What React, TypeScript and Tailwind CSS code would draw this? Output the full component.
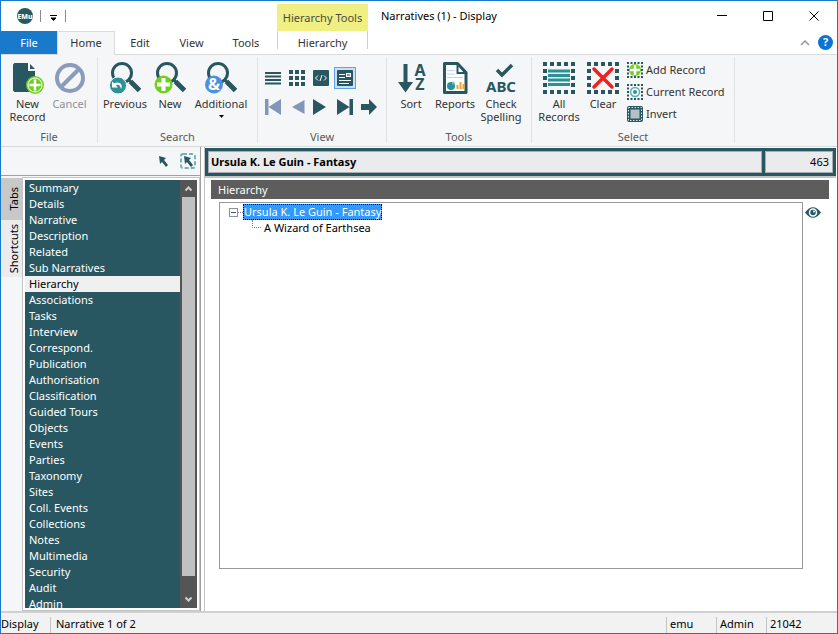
import type { ReactNode } from "react";
import clsx from "clsx";

const sections = [
  "Summary",
  "Details",
  "Narrative",
  "Description",
  "Related",
  "Sub Narratives",
  "Hierarchy",
  "Associations",
  "Tasks",
  "Interview",
  "Correspond.",
  "Publication",
  "Authorisation",
  "Classification",
  "Guided Tours",
  "Objects",
  "Events",
  "Parties",
  "Taxonomy",
  "Sites",
  "Coll. Events",
  "Collections",
  "Notes",
  "Multimedia",
  "Security",
  "Audit",
  "Admin",
];

export default function App() {
  return (
    <div className="flex h-screen flex-col border border-[#1979ca] bg-white font-['Noto_Sans','Open_Sans',sans-serif] text-[11px] text-black">
      <TitleBar />
      <Ribbon />
      <main className="flex min-h-0 flex-1 gap-[3px] bg-white">
        <Sidebar />
        <RecordPane />
      </main>
      <StatusBar />
    </div>
  );
}

/* Title bar and ribbon tabs */

function TitleBar() {
  return (
    <header className="flex h-[53px] shrink-0 text-[#333]">
      <div className="flex w-[276px] shrink-0 flex-col">
        <div className="flex h-[30px] items-center pl-4">
          <AppLogo />
          <span className="ml-[7px] h-3 w-px bg-[#8a8a8a]" />
          <button type="button" aria-label="Customise toolbar" className="ml-2 flex h-4 w-4 items-center">
            <svg width="10" height="8" viewBox="0 0 10 8" className="mt-1">
              <path d="M1 1.500h7M2 4h5L4.500 6.500z" stroke="#000" strokeWidth="1" />
            </svg>
          </button>
          <span className="h-3 w-px bg-[#8a8a8a]" />
        </div>
        <nav className="flex flex-1 text-center">
          <button type="button" className="w-14 bg-[#1979ca] pt-[2px] text-white">
            File
          </button>
          <button type="button" className="relative -mb-px w-[58px] border border-b-0 border-[#dadbdc] bg-[#f5f6f7]">
            Home
          </button>
          <button type="button" className="w-[50px] pt-[2px]">Edit</button>
          <button type="button" className="w-[53px] pt-[2px]">View</button>
          <button type="button" className="w-[56px] pt-[2px]">Tools</button>
        </nav>
      </div>
      <div className="flex w-[91px] shrink-0 flex-col pt-[3px] text-center">
        <div className="flex h-[27px] shrink-0 items-center justify-center bg-[#f0ef83] pt-[2px] text-[#4b4b3a]">
          Hierarchy Tools
        </div>
        <button type="button" className="h-[18px] border-x border-[#d0d0d0] pt-[5px] leading-[13px]">
          Hierarchy
        </button>
      </div>
      <div className="flex flex-1 flex-col">
        <div className="flex h-[30px] items-center pl-[13px]">
          <h1 className="flex-1 text-[11px] text-black">Narratives (1) - Display</h1>
          <WindowButton label="Minimise">
            <path d="M0 4.500h10" />
          </WindowButton>
          <WindowButton label="Maximise">
            <path d="M.5.500h9v9h-9z" />
          </WindowButton>
          <WindowButton label="Close">
            <path d="M.5.500l9 9M9.500.500l-9 9" />
          </WindowButton>
        </div>
        <div className="flex flex-1 items-center justify-end gap-2 pr-1">
          <button type="button" aria-label="Collapse ribbon">
            <svg width="10" height="6" viewBox="0 0 10 6" fill="none" stroke="#999" strokeWidth="1.500">
              <path d="M1 5l4-4 4 4" />
            </svg>
          </button>
          <button
            type="button"
            aria-label="Help"
            className="flex h-[15px] w-[15px] items-center justify-center rounded-full bg-[#0a74d4] text-[11px] font-bold text-white"
          >
            ?
          </button>
        </div>
      </div>
    </header>
  );
}

function AppLogo() {
  return (
    <svg width="16" height="16" viewBox="0 0 16 16" className="overflow-visible">
      <circle cx="8" cy="8" r="8" fill="#2a5860" />
      <text x="8" y="11" textAnchor="middle" fontSize="7" fontWeight="800" fill="#fff">
        EMu
      </text>
    </svg>
  );
}

function WindowButton({ label, children }: { label: string; children: ReactNode }) {
  return (
    <button type="button" aria-label={label} className="flex h-full w-[46px] items-center justify-center">
      <svg width="10" height="10" viewBox="0 0 10 10" fill="none" stroke="#000">
        {children}
      </svg>
    </button>
  );
}

/* Ribbon */

function Ribbon() {
  return (
    <div className="flex h-[93px] shrink-0 border-y border-[#dadbdc] bg-[#f5f6f7] pt-[2px] pb-[3px] text-[#333]">
      <RibbonGroup label="File" className="w-[97px]">
        <RibbonButton label="New Record" className="w-[47px]">
          <NewRecordIcon />
        </RibbonButton>
        <RibbonButton label="Cancel" className="w-[37px]" disabled>
          <CancelIcon />
        </RibbonButton>
      </RibbonGroup>
      <RibbonGroup label="Search" className="w-[160px]">
        <RibbonButton label="Previous" className="w-[48px]">
          <Magnifier>
            <circle cx="9" cy="23.500" r="8.500" fill="#2a9196" stroke="#f5f6f7" />
            <path d="M3 19.500v6h6l-2.200-2.200c2-1.600 4.700-.3 5.200 3.700 2.500-4-1.200-8.500-7-5.800z" fill="#fff" />
          </Magnifier>
        </RibbonButton>
        <RibbonButton label="New" className="w-[42px]">
          <Magnifier>
            <circle cx="9.500" cy="22.500" r="9" fill="#6fcf1f" />
            <path d="M9.500 16v13M3 22.500h13" stroke="#fff" strokeWidth="4" />
          </Magnifier>
        </RibbonButton>
        <RibbonButton label="Additional" className="w-[60px]" menu>
          <Magnifier>
            <circle cx="9" cy="22.500" r="9" fill="#4a90e2" />
            <text x="9" y="28" textAnchor="middle" fontSize="16" fontWeight="700" fill="#fff">
              &amp;
            </text>
          </Magnifier>
        </RibbonButton>
      </RibbonGroup>
      <RibbonGroup label="View" className="w-[129px]">
        <ViewButtons />
      </RibbonGroup>
      <RibbonGroup label="Tools" className="w-[145px]">
        <RibbonButton label="Sort" className="w-[42px]">
          <SortIcon />
        </RibbonButton>
        <RibbonButton label="Reports" className="w-[46px]">
          <ReportsIcon />
        </RibbonButton>
        <RibbonButton label="Check Spelling" className="w-[46px]">
          <SpellingIcon />
        </RibbonButton>
      </RibbonGroup>
      <RibbonGroup label="Select" className="w-[203px]">
        <RibbonButton label="All Records" className="w-[48px]">
          <svg width="32" height="32" viewBox="0 0 32 32">
            <Marquee />
            <path d="M5 9h22M5 13.500h22M5 18h22M5 22.500h22" stroke="#2a9196" strokeWidth="3" />
          </svg>
        </RibbonButton>
        <RibbonButton label="Clear" className="w-[40px]">
          <svg width="32" height="32" viewBox="0 0 32 32">
            <Marquee />
            <path d="M7 7l18 18M25 7L7 25" stroke="#ee2020" strokeWidth="3.500" strokeLinecap="round" />
          </svg>
        </RibbonButton>
        <div className="ml-1 flex flex-col">
          <SelectButton label="Add Record">
            <SmallMarquee />
            <circle cx="8" cy="8" r="6" fill="#6fcf1f" />
            <path d="M8 3v10M3 8h10" stroke="#fff" strokeWidth="2.500" />
          </SelectButton>
          <SelectButton label="Current Record">
            <SmallMarquee />
            <circle cx="8" cy="8" r="4.500" fill="none" stroke="#5fb0b4" strokeWidth="1.500" />
            <circle cx="8" cy="8" r="2" fill="#2a9196" />
          </SelectButton>
          <SelectButton label="Invert">
            <rect width="16" height="16" rx="2" fill="#285761" />
            <rect x="1.500" y="1.500" width="13" height="13" fill="none" stroke="#dfe6e8" strokeDasharray="1.500 1.500" />
            <rect x="3.500" y="3.500" width="9" height="9" fill="#b4c0c6" />
          </SelectButton>
        </div>
      </RibbonGroup>
    </div>
  );
}

function RibbonGroup({ label, className, children }: { label: string; className: string; children: ReactNode }) {
  return (
    <section className={clsx("flex shrink-0 flex-col border-r border-[#e0e1e2] pt-[5px]", className)}>
      <div className="flex flex-1 items-start pl-[3px]">{children}</div>
      <h2 className="h-3 text-center leading-3 text-[#5a5a5a]">{label}</h2>
    </section>
  );
}

interface RibbonButtonProps {
  label: string;
  className: string;
  disabled?: boolean;
  menu?: boolean;
  children: ReactNode;
}

function RibbonButton({ label, className, disabled, menu, children }: RibbonButtonProps) {
  return (
    <button
      type="button"
      disabled={disabled}
      className={clsx("flex shrink-0 flex-col items-center text-center leading-[13px] disabled:text-[#8d9199]", className)}
    >
      {children}
      <span className="mt-[3px]">{label}</span>
      {menu && (
        <svg width="5" height="3" viewBox="0 0 5 3" className="mt-[5px]">
          <path d="M0 0h5L2.500 3z" />
        </svg>
      )}
    </button>
  );
}

function SelectButton({ label, children }: { label: string; children: ReactNode }) {
  return (
    <button type="button" className="flex h-[22px] items-center gap-[3px] leading-4 first:-mt-[3px]">
      <svg width="16" height="16" viewBox="0 0 16 16">
        {children}
      </svg>
      {label}
    </button>
  );
}

function ViewButtons() {
  return (
    <div className="grid grid-cols-[repeat(5,24px)] grid-rows-[24px_34px] pt-1">
      <IconButton label="List view">
        <path d="M0 3h16M0 6.500h16M0 10h16M0 13.500h16" stroke="#285761" strokeWidth="2" />
      </IconButton>
      <IconButton label="Grid view">
        <path d="M0 2h16M0 8h16M0 14h16" stroke="#285761" strokeWidth="4" strokeDasharray="4 2" />
      </IconButton>
      <IconButton label="Source view">
        <rect width="16" height="16" rx="1" fill="#285761" />
        <path d="M5 5.500L2.500 8 5 10.500M11 5.500L13.500 8 11 10.500M9 5l-2 6" fill="none" stroke="#fff" />
      </IconButton>
      <IconButton label="Page view" active>
        <rect width="16" height="16" rx="1" fill="#285761" />
        <path d="M2 4.500h6M2 7.500h6M2 10.500h12M2 13.500h10" stroke="#fff" />
        <rect x="9.500" y="3.500" width="4" height="3" fill="#7f9ba3" stroke="#fff" />
      </IconButton>
      <span />
      <IconButton label="First record">
        <path d="M0 0h3.500v16H0zM16 0v16L3.500 8z" fill="#8496b8" />
      </IconButton>
      <IconButton label="Previous record">
        <path d="M15.500 1v14L3 8z" fill="#8496b8" />
      </IconButton>
      <IconButton label="Next record">
        <path d="M0 0v16L13 8z" fill="#285761" />
      </IconButton>
      <IconButton label="Last record">
        <path d="M0 0v16L12.500 8zM12.500 0H16v16h-3.500z" fill="#285761" />
      </IconButton>
      <IconButton label="Go to record">
        <path d="M0 5h8V0l8 8-8 8v-5H0z" fill="#285761" />
      </IconButton>
    </div>
  );
}

function IconButton({ label, active, children }: { label: string; active?: boolean; children: ReactNode }) {
  return (
    <button
      type="button"
      aria-label={label}
      className={clsx(
        "flex h-[22px] w-[22px] items-center justify-center self-center justify-self-center border",
        active ? "border-[#62a2e4] bg-[#c9e0f7]" : "border-transparent"
      )}
    >
      <svg width="16" height="16" viewBox="0 0 16 16" className="shrink-0">
        {children}
      </svg>
    </button>
  );
}

/* Ribbon icons */

function Marquee() {
  return (
    <rect
      x="2"
      y="2"
      width="28"
      height="28"
      fill="none"
      stroke="#285761"
      strokeWidth="4"
      strokeDasharray="4 3"
      strokeDashoffset="2"
    />
  );
}

function SmallMarquee() {
  return (
    <rect
      x="1"
      y="1"
      width="14"
      height="14"
      fill="none"
      stroke="#285761"
      strokeWidth="2"
      strokeDasharray="2 1.500"
      strokeDashoffset="1"
    />
  );
}

function NewRecordIcon() {
  return (
    <svg width="32" height="32" viewBox="0 0 32 32">
      <path d="M1 2.500L2.500 1H16v8h7v21H2.500L1 28.500z" fill="#285761" />
      <path d="M18 2l5 5h-5z" fill="#285761" />
      <circle cx="23" cy="23" r="9" fill="#6fcf1f" />
      <circle cx="23" cy="23" r="7" fill="none" stroke="#fff" />
      <path d="M23 17.500v11M17.500 23h11" stroke="#fff" strokeWidth="2.500" />
    </svg>
  );
}

function CancelIcon() {
  return (
    <svg width="32" height="32" viewBox="0 0 32 32" fill="none" stroke="#8a9bbb" strokeWidth="4">
      <circle cx="16" cy="16" r="13" />
      <path d="M25.500 6.500l-19 19" />
    </svg>
  );
}

function Magnifier({ children }: { children: ReactNode }) {
  return (
    <svg width="32" height="32" viewBox="0 0 32 32" className="overflow-visible">
      <circle cx="13" cy="11" r="9.500" fill="none" stroke="#285761" strokeWidth="3" />
      <path d="M19 17l3 3" stroke="#285761" strokeWidth="3" />
      <path d="M21.500 19.500l9 9" stroke="#285761" strokeWidth="5" />
      {children}
    </svg>
  );
}

function SortIcon() {
  return (
    <svg width="32" height="32" viewBox="0 0 32 32" fill="#285761" className="overflow-visible">
      <path d="M8.500 2h4v18h5.500l-7.500 10.500L3 20h5.500z" />
      <text x="25" y="14" textAnchor="middle" fontSize="16" fontWeight="700">
        A
      </text>
      <text x="25" y="28" textAnchor="middle" fontSize="16" fontWeight="700">
        Z
      </text>
    </svg>
  );
}

function ReportsIcon() {
  return (
    <svg width="32" height="32" viewBox="0 0 32 32">
      <path d="M6 1.500h12.500l8.500 9v20H5.500v-29z" fill="#fff" stroke="#285761" strokeWidth="3" strokeLinejoin="round" />
      <path d="M18.500 2v9h8z" fill="#fff" stroke="#285761" strokeWidth="2" />
      <path d="M8 8.500h8M8 12h8M8 15.500h16" stroke="#bcd8ee" />
      <circle cx="12" cy="24" r="4" fill="#2a9196" />
      <path d="M13 22.500v-3a3 3 0 0 1 3 3z" fill="#60c0c0" />
      <path d="M18.500 27v-4M21.500 27v-7M24.500 27v-5" stroke="#f2a030" strokeWidth="2" />
    </svg>
  );
}

function SpellingIcon() {
  return (
    <svg width="32" height="32" viewBox="0 0 32 32" className="overflow-visible">
      <path d="M12 8l5 5L27 3" fill="none" stroke="#285761" strokeWidth="3.500" />
      <text x="16" y="30" textAnchor="middle" fontSize="15" fontWeight="700" fill="#285761">
        ABC
      </text>
    </svg>
  );
}

/* Left side: section list */

function Sidebar() {
  return (
    <aside className="flex w-[200px] shrink-0 flex-col border-r border-[#a0a0a0] bg-[#f5f6f7]">
      <div className="flex h-[29px] shrink-0 items-center justify-end gap-3 border-b border-[#a0a0a0] pr-1">
        <button type="button" aria-label="Select">
          <svg width="9" height="11" viewBox="0 0 9 11">
            <path d="M0 0l7 2-2 2 4 5-2 2-4-5-2 2z" fill="#285761" />
          </svg>
        </button>
        <button type="button" aria-label="Select area">
          <svg width="16" height="16" viewBox="0 0 16 16">
            <rect x="1" y="1" width="14" height="14" rx="2" fill="none" stroke="#73b4b6" strokeWidth="2" strokeDasharray="4 2" />
            <path d="M4 3l7 2-2 2 4 5-2 2-4-5-2 2z" fill="#285761" />
          </svg>
        </button>
      </div>
      <div className="flex min-h-0 flex-1">
        <div className="w-[21px] shrink-0 pt-[2px]">
          <SideTab label="Tabs" className="h-[42px] bg-[#c8c8c8]" />
          <SideTab label="Shortcuts" className="h-[57px] bg-[#ececec]" />
        </div>
        <div className="mt-px flex flex-1 border border-[#c4c4c4] bg-white p-[2px]">
          <ul className="flex-1 overflow-hidden bg-[#285761] text-white">
            {sections.map((name) => (
              <li key={name}>
                <button
                  type="button"
                  className={clsx(
                    "block h-4 w-full pl-1 text-left leading-4",
                    name === "Hierarchy" && "bg-[#f0f0f0] text-black"
                  )}
                >
                  {name}
                </button>
              </li>
            ))}
          </ul>
          <div className="flex w-[17px] shrink-0 flex-col items-center bg-[#555]">
            <ScrollArrow className="h-[17px]" />
            <div className="w-[13px] flex-1 bg-[#c1c1c1]" />
            <ScrollArrow className="h-[32px] rotate-180 pb-[15px]" />
          </div>
        </div>
      </div>
    </aside>
  );
}

function SideTab({ label, className }: { label: string; className: string }) {
  return (
    <button type="button" className={clsx("flex w-full items-center justify-center pl-1", className)}>
      <span className="rotate-180 leading-4 [writing-mode:vertical-rl]">{label}</span>
    </button>
  );
}

function ScrollArrow({ className }: { className: string }) {
  return (
    <div className={clsx("flex items-center justify-center", className)}>
      <svg width="7" height="6" viewBox="0 0 7 6" fill="none" stroke="#d0d0d0" strokeWidth="2">
        <path d="M.5 4.500l3-3 3 3" />
      </svg>
    </div>
  );
}

/* Right side: current record */

function RecordPane() {
  return (
    <section className="flex min-w-0 flex-1 flex-col border-l border-[#c4c4c4] pt-px pr-px">
      <div className="flex h-[28px] shrink-0 gap-[3px] bg-[#285761] p-[3px]">
        <input
          aria-label="Record title"
          readOnly
          value="Ursula K. Le Guin - Fantasy"
          className="min-w-0 flex-1 border border-[#a9adaf] bg-[#e9ebed] px-[2px] font-bold"
        />
        <input
          aria-label="Record number"
          readOnly
          value="463"
          className="w-[68px] border border-[#a9adaf] bg-[#e9ebed] px-[3px] text-right"
        />
      </div>
      <div className="flex min-h-0 flex-1 flex-col border-t-2 border-[#c4c4c4] pt-[2px] pr-[7px] pl-[6px]">
        <h2 className="h-[19px] shrink-0 bg-[#5c5d5c] pl-[7px] leading-[19px] text-white">Hierarchy</h2>
        <div className="mt-[3px] mb-[42px] flex min-h-0 flex-1 px-2">
          <div className="flex-1 border border-[#999] pt-px pl-[9px]">
            <ul>
              <li>
                <div className="flex h-4 items-center">
                  <button
                    type="button"
                    aria-label="Collapse"
                    className="flex h-[9px] w-[9px] items-center justify-center border border-[#919191] bg-white"
                  >
                    <span className="h-px w-[5px] bg-[#3b4fa0]" />
                  </button>
                  <span className="w-[5px] border-t border-dotted border-[#808080]" />
                  <a href="#record" className="border border-dotted border-black bg-[#3399ff] leading-[14px] text-white">
                    Ursula K. Le Guin - Fantasy
                  </a>
                </div>
                <ul className="pl-[23px]">
                  <li className="flex h-4">
                    <span className="h-[8px] w-[9px] border-b border-l border-dotted border-[#808080]" />
                    <a href="#child" className="pl-[3px] leading-4">
                      A Wizard of Earthsea
                    </a>
                  </li>
                </ul>
              </li>
            </ul>
          </div>
          <button type="button" aria-label="Show" className="mt-[5px] ml-[2px] self-start">
            <svg width="16" height="11" viewBox="0 0 16 11">
              <path d="M0 5.500Q8-5 16 5.500 8 16 0 5.500z" fill="#285761" />
              <circle cx="8" cy="5.500" r="3.500" fill="#285761" stroke="#fff" strokeWidth="1.500" />
              <circle cx="9" cy="4.500" r="1" fill="#fff" />
            </svg>
          </button>
        </div>
      </div>
    </section>
  );
}

/* Status bar */

function StatusBar() {
  return (
    <footer className="flex h-[22px] shrink-0 border-t-2 border-[#d0d0d0] bg-[#f2f2f2]">
      <span className="mt-1 w-[49px] leading-[14px]">Display</span>
      <StatusCell className="flex-1 pl-[5px]">Narrative 1 of 2</StatusCell>
      <StatusCell className="w-[50px] pl-[3px]">emu</StatusCell>
      <StatusCell className="w-[50px] pl-[3px]">Admin</StatusCell>
      <StatusCell className="w-[71px] pl-[3px]">21042</StatusCell>
    </footer>
  );
}

function StatusCell({ className, children }: { className: string; children: ReactNode }) {
  return <span className={clsx("mt-1 border-l border-[#c4c4c4] leading-[14px]", className)}>{children}</span>;
}
